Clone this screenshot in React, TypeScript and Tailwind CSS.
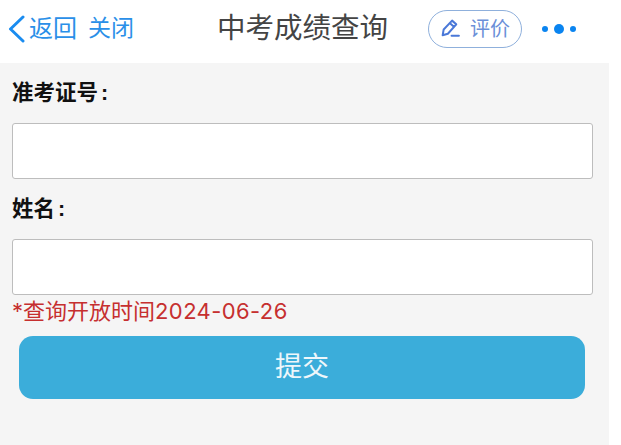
const cjk = 'font-["Liberation_Sans","Noto_Sans_CJK_SC",sans-serif]';

function Field({ label }: { label: string }) {
  return (
    <div>
      <div className="h-[60px] pt-[16px] flex text-[21.5px] leading-[28px] font-bold text-[#111]">
        {label}
        <span className="ml-[3px]">:</span>
      </div>
      <input className="block w-[581px] h-[56px] bg-white border border-[#bdbdbd] rounded-[3px]" />
    </div>
  );
}

export default function App() {
  return (
    <div className={`w-[621px] h-[445px] bg-white overflow-hidden ${cjk}`}>
      <div className="w-[609px] h-[445px] flex flex-col bg-[#f5f5f5]">
        <div className="w-[621px] h-[63px] shrink-0 bg-white flex items-center pb-[6px]">
          <svg width="18" height="28" viewBox="0 0 18 28" className="ml-[7px] shrink-0">
            <path d="M16 2 L3.5 14 L16 26" fill="none" stroke="#1a8cf0" strokeWidth="3" strokeLinecap="round" strokeLinejoin="round" />
          </svg>
          <span className="ml-[4px] text-[24px] leading-none text-[#2a8fe8] w-[59px]">返回</span>
          <span className="text-[23px] leading-none text-[#2a8fe8] w-[46px] whitespace-nowrap">关闭</span>
          <span className="ml-[83px] text-[28.5px] leading-none text-[#444] w-[171px] whitespace-nowrap">中考成绩查询</span>
          <div className="ml-[40px] w-[94px] h-[38px] rounded-full border border-[#8fb0dc] flex items-center justify-center gap-[9px]">
            <svg width="21" height="21" viewBox="0 0 20 20" className="shrink-0">
              <path d="M11.5 2.5 L15.5 6 L7.5 15 L2.5 16.5 L3.5 11 Z M9.5 5 L13.5 8.5 M11 17 H18" fill="none" stroke="#4a78d8" strokeWidth="1.9" strokeLinejoin="round" strokeLinecap="round" />
            </svg>
            <span className="text-[20px] leading-none text-[#6b8fd8] whitespace-nowrap">评价</span>
          </div>
          <div className="ml-[20px] flex items-center gap-[6px]">
            <span className="w-[6px] h-[6px] rounded-full bg-[#0a84f0]" />
            <span className="w-[10px] h-[10px] rounded-full bg-[#0a84f0]" />
            <span className="w-[6px] h-[6px] rounded-full bg-[#0a84f0]" />
          </div>
        </div>
        <div className="px-[12px]">
          <Field label="准考证号" />
          <Field label="姓名" />
          <div className="mt-[2px] h-[29px] text-[22px] leading-[29px] text-[#c62f2f] whitespace-nowrap">
            <span className='font-["Inter",sans-serif]'>*</span>查询开放时间<span className='font-["Inter",sans-serif] tracking-[0.4px]'>2024-06-26</span>
          </div>
          <button className="block ml-[7px] mt-[10px] w-[566px] h-[63px] rounded-[14px] bg-[#3badda] text-[#eef7fb] text-[27px]">提交</button>
        </div>
      </div>
    </div>
  );
}
